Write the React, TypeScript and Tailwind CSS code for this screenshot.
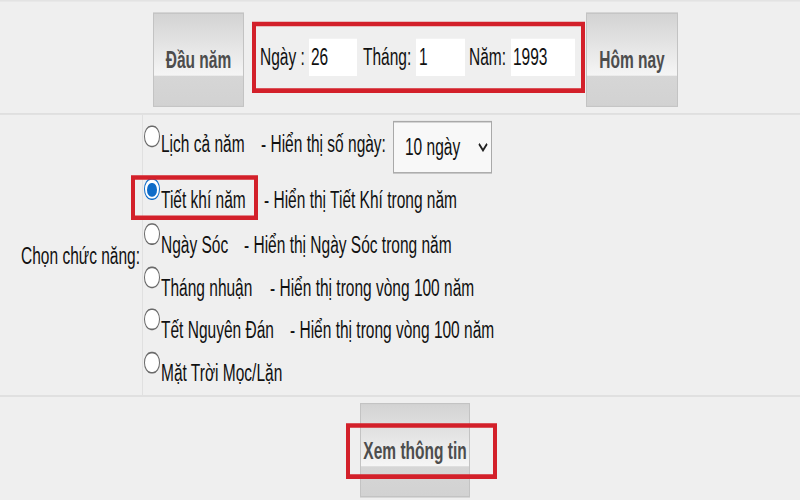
import React from "react";

function Radio({ checked = false }: { checked?: boolean }) {
  if (checked) {
    return (
      <div className="w-[16px] h-[14px] shrink-0 rounded-full border-[1.5px] border-[#0f6cc8] bg-white flex items-center justify-center">
        <div className="w-[10px] h-[9px] rounded-full bg-[#0f6cc8]" />
      </div>
    );
  }
  return <div className="w-[16px] h-[14px] shrink-0 rounded-full border-[1.5px] border-[#6a6a6a] bg-white" />;
}

function Btn({ children, className = "" }: { children: React.ReactNode; className?: string }) {
  return (
    <div
      className={
        "h-[61px] shrink-0 border border-[#c3c3c3] bg-[linear-gradient(to_bottom,#d3d3d3_0%,#f5f5f5_67%,#d6d6d6_68%,#d2d2d2_100%)] flex items-center justify-center font-bold text-[#4d4d4d] " +
        className
      }
    >
      {children}
    </div>
  );
}

function RedBox({ className = "" }: { className?: string }) {
  return <div className={"absolute border-x-4 border-y-[3px] border-[#d3202a] pointer-events-none " + className} />;
}

export default function App() {
  return (
    <div className="w-[800px] h-[500px] overflow-hidden bg-[#efefef]">
      <div className="w-[800px] h-[322.6px] origin-top-left scale-y-[1.55] bg-[#efefef] text-[#111] text-[15.5px] leading-[20px] font-[family-name:'Liberation_Sans',Arial,sans-serif]">
        {/* Top section */}
        <div className="h-[74px] border-t border-t-[#e3e3e3] border-b border-b-[#dcdcdc] flex items-start pl-[153px] pt-[7px]">
          <Btn className="w-[91px]">Đầu năm</Btn>
          <div className="ml-[8px] mt-[6px] h-[46px] w-[333px] shrink-0 border-x-4 border-y-[3px] border-[#d3202a] flex items-center">
            <span className="w-[53px] pl-[4px] shrink-0">Ngày :</span>
            <div className="w-[48px] h-[24.5px] bg-white pl-[2px] flex items-center shrink-0">26</div>
            <span className="ml-[6px] w-[53px] shrink-0">Tháng:</span>
            <div className="w-[49px] h-[24.5px] bg-white pl-[3px] flex items-center shrink-0">1</div>
            <span className="ml-[4px] w-[42px] shrink-0">Năm:</span>
            <div className="w-[64px] h-[24.5px] bg-white pl-[2px] flex items-center shrink-0">1993</div>
          </div>
          <Btn className="ml-[1px] w-[92px]">Hôm nay</Btn>
        </div>

        {/* Middle section */}
        <div className="h-[182px] flex border-b border-b-[#dcdcdc]">
          <div className="w-[142px] shrink-0 flex items-center justify-end pr-[2px]">Chọn chức năng:</div>
          <div className="flex-1 border-l border-l-[#e0e0e0] flex flex-col pl-[1px]">
            {/* Row 1 */}
            <div className="h-[41px] flex items-start">
              <div className="mt-[7px]">
                <Radio />
              </div>
              <span className="ml-[1px] w-[100px] mt-[9px] shrink-0">Lịch cả năm</span>
              <span className="w-[132px] mt-[9px] shrink-0">- Hiển thị số ngày:</span>
              <div className="mt-[4px] w-[99px] h-[34px] border border-[#a9a9a9] bg-[#f8f8f8] flex items-center justify-between pl-[11px] pr-[3px]">
                <span>10 ngày</span>
                <svg width="10" height="6" viewBox="0 0 10 6" fill="none">
                  <polyline points="1,0.8 5,5 9,0.8" stroke="#222" strokeWidth="1.6" />
                </svg>
              </div>
            </div>
            {/* Row 2 */}
            <div className="relative h-[29px] flex items-start">
              <Radio checked />
              <span className="ml-[1px] w-[103px] mt-[4px] shrink-0">Tiết khí năm</span>
              <span className="mt-[4px]">- Hiển thị Tiết Khí trong năm</span>
              <RedBox className="left-[-13px] top-[-2px] w-[127px] h-[29px]" />
            </div>
            {/* Row 3 */}
            <div className="h-[27.5px] flex items-start">
              <Radio />
              <span className="ml-[1px] w-[83px] mt-[4px] shrink-0">Ngày Sóc</span>
              <span className="mt-[4px]">- Hiển thị Ngày Sóc trong năm</span>
            </div>
            {/* Row 4 */}
            <div className="h-[27.5px] flex items-start">
              <Radio />
              <span className="ml-[1px] w-[109px] mt-[4px] shrink-0">Tháng nhuận</span>
              <span className="mt-[4px]">- Hiển thị trong vòng 100 năm</span>
            </div>
            {/* Row 5 */}
            <div className="h-[27.5px] flex items-start">
              <Radio />
              <span className="ml-[1px] w-[129px] mt-[4px] shrink-0">Tết Nguyên Đán</span>
              <span className="mt-[4px]">- Hiển thị trong vòng 100 năm</span>
            </div>
            {/* Row 6 */}
            <div className="h-[27.5px] flex items-start">
              <Radio />
              <span className="ml-[1px] mt-[4px]">Mặt Trời Mọc/Lặn</span>
            </div>
          </div>
        </div>

        {/* Bottom section */}
        <div className="flex pl-[360px] pt-[4px]">
          <div className="relative">
            <Btn className="w-[110px]">Xem thông tin</Btn>
            <RedBox className="left-[-14px] top-[13px] w-[151px] h-[35.5px]" />
          </div>
        </div>
      </div>
    </div>
  );
}
